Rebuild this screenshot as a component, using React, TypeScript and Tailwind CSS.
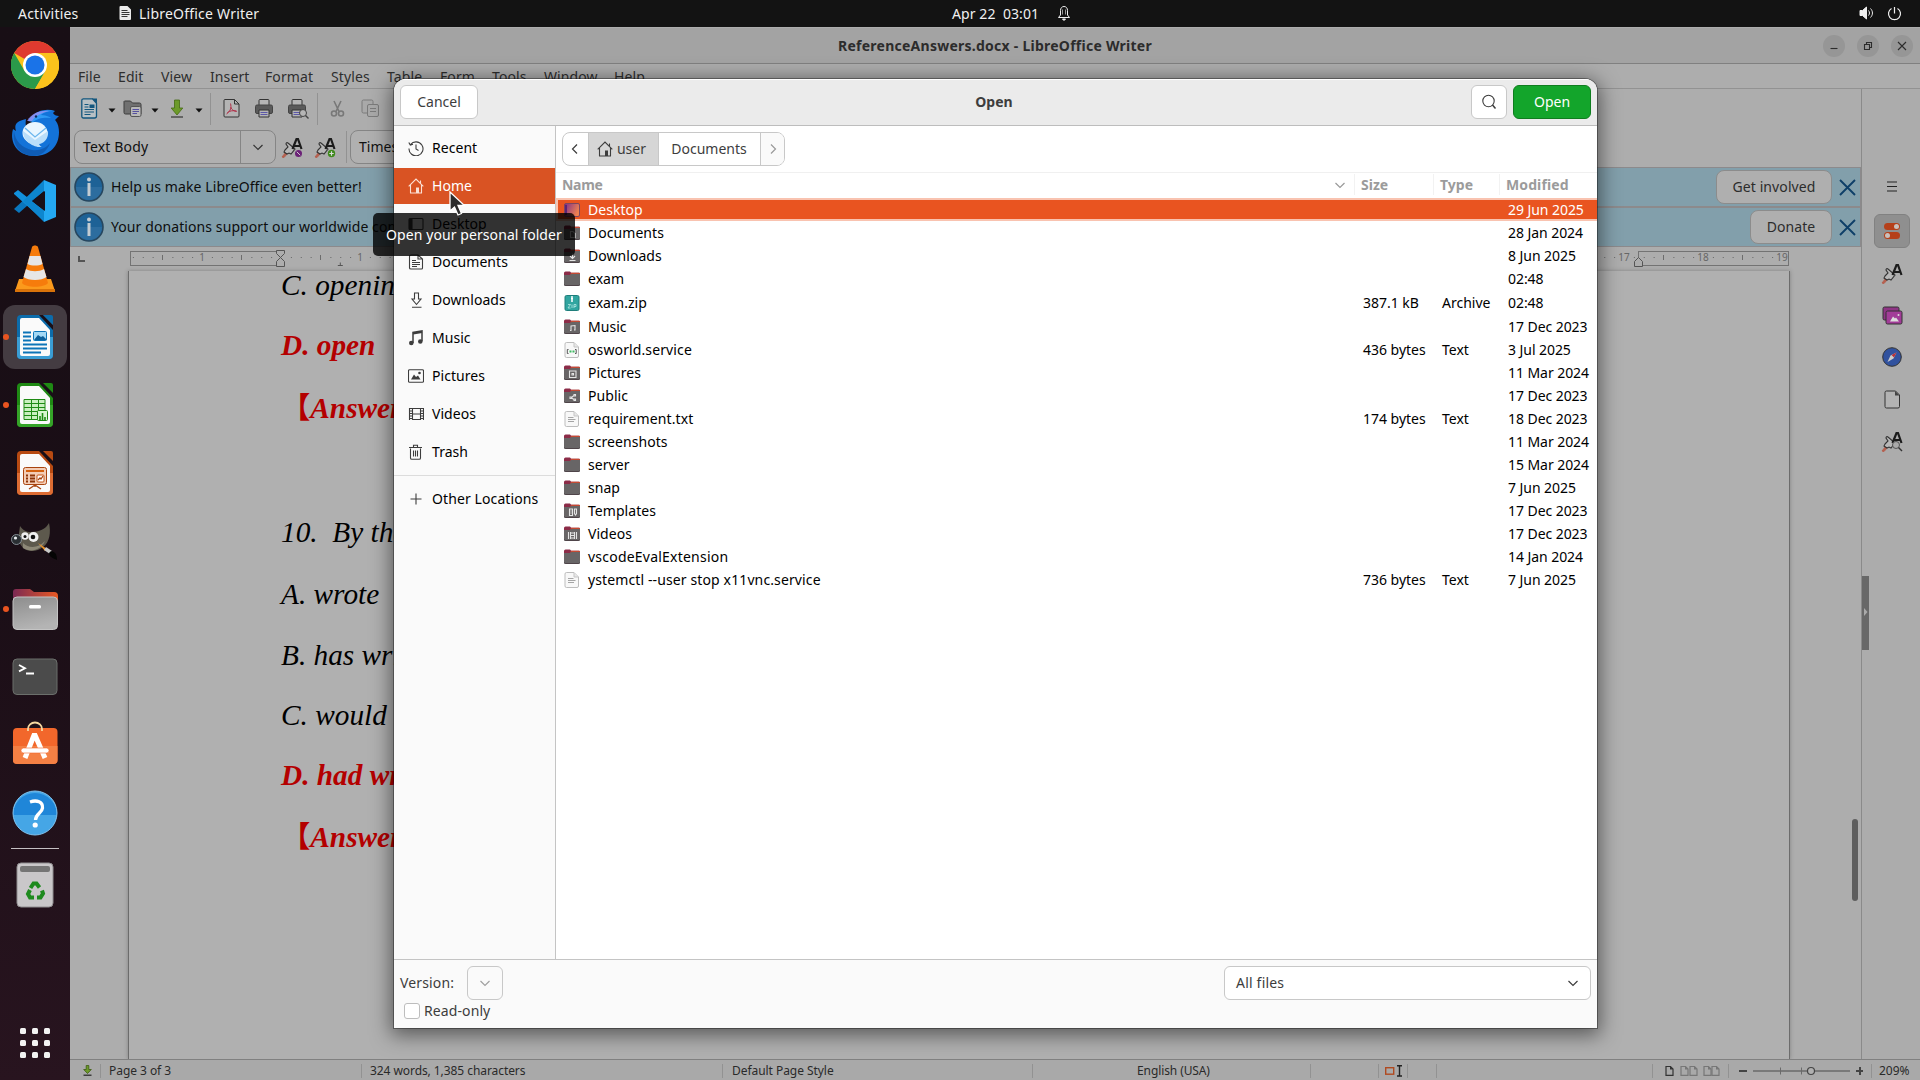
import React, { ReactNode } from "react";

/* ---------- dock icons ---------- */

const Chrome = () => (
  <svg width="48" height="48" viewBox="0 0 48 48">
    <circle cx="24" cy="24" r="24" fill="#fbc21c" />
    <path d="M24 24 3.200 12A24 24 0 0 1 44.800 12Z" fill="#df3a2f" />
    <path d="M3.200 12A24 24 0 0 0 24 48L34.500 30 24 24 13.600 30Z" fill="#2b9a4a" />
    <path d="M24 12H44.800A24 24 0 0 1 24 48L34.400 30Z" fill="#fbc21c" />
    <circle cx="24" cy="24" r="12" fill="#fff" />
    <circle cx="24" cy="24" r="9.500" fill="#1a73e8" />
  </svg>
);

const Thunderbird = () => (
  <svg width="50" height="48" viewBox="0 0 50 48">
    <path d="M3 20c-4 14 5 27 21 27s25-10 25-24c0-6-2-10-4-12l4-4c-3 0-5-1-6-3l2-2c-9-3-19 0-23 6l-4 2 6 1c-4 3-6 8-5 13-3-4-4-8-3-14C6 12 4 16 6 22z" fill="#1373d9" />
    <path d="M4 22c1 10 8 17 18 19 8 1 14-2 18-7-3 9-10 13-17 13C10 46 2 36 4 22Z" fill="#0f5cb5" />
    <path d="M18 12c4-8 14-12 27-10-8 0-12 2-14 4 6 0 10 3 10 3-6-1-14 0-18 4z" fill="#2f9bf5" />
    <path d="M17 12c4-7 12-11 22-10-8 2-14 5-17 10z" fill="#a58cf0" opacity=".7" />
    <ellipse cx="25" cy="24" rx="12.500" ry="11" fill="#e9f6ff" />
    <path d="M13 22l12 9 13-9c1 8-5 13-9 13 1 2 2 3 3 3-6 1-19-4-19-16z" fill="#b9defa" />
    <path d="M15 19l10 9 11-9" fill="none" stroke="#6db7ee" strokeWidth="1.300" />
    <circle cx="26" cy="7.500" r="1.200" fill="#0a2b5a" />
  </svg>
);

const VSCode = () => (
  <svg width="44" height="44" viewBox="0 0 44 44">
    <path d="M1 30 31 2l2 8L6 34Z" fill="#0a76bd" />
    <path d="M1 14 5 11 33 33l-2 9L1 15Z" fill="#1290dc" />
    <path d="M31 1 43 6v32l-12 5V1Z" fill="#24a8f2" />
    <path d="M31 1v11L18 22l13 10v11L14 26l-4-4 4-4Z" fill="#0d86cf" />
    <path d="M32 12v20L19 22Z" fill="#190f17" />
  </svg>
);

const VLC = () => (
  <svg width="42" height="48" viewBox="0 0 42 48">
    <path d="M5 34h32l4 12H1Z" fill="#fb9a1c" />
    <path d="M1 44h40v3H1z" fill="#d9730a" />
    <path d="M18 2c1-2 5-2 6 0l10 36c-4 5-22 5-26 0Z" fill="#f67c0c" />
    <path d="M15.500 11h11l2 8c-4 2-11 2-15 0zM12 24c5 3 13 3 18 0l2.500 8c-5 4-18 4-23 0z" fill="#e6e6e6" />
  </svg>
);

const OfficeDoc = ({ dark, light, children }: { dark: string; light: string; children: ReactNode }) => (
  <svg width="38" height="46" viewBox="0 0 38 46">
    <path d="M5 1h20l12 13v27a4 4 0 0 1-4 4H5a4 4 0 0 1-4-4V5a4 4 0 0 1 4-4Z" fill={dark} />
    <path d="M1 23h36v18a4 4 0 0 1-4 4H5a4 4 0 0 1-4-4Z" fill={light} />
    <path d="M6 4h17l11 12v24a2 2 0 0 1-2 2H6a2 2 0 0 1-2-2V6a2 2 0 0 1 2-2Z" fill="#fafafa" />
    <path d="M23 1h4l10 10v5Z" fill="#190f17" />
    <path d="M27 1h8a2 2 0 0 1 2 2v8Z" fill={dark} />
    {children}
  </svg>
);

const WriterIcon = () => (
  <OfficeDoc dark="#0c6cab" light="#3a9dd4">
    <path d="M7 18.500h8M7 22.500h8M7 26.500h8M7 30.500h24M7 34.500h24M7 38.500h18" stroke="#0c74b8" strokeWidth="2" />
    <rect x="17.500" y="17.500" width="13" height="9" rx="1" fill="#a3d8f5" stroke="#0c74b8" />
    <path d="M18 26l4-5 3 2 2-1 4 4z" fill="#0c5f9a" />
  </OfficeDoc>
);

const CalcIcon = () => (
  <OfficeDoc dark="#1f8a14" light="#35a428">
    <path d="M8 17.500h21v20H8zM8 21.500h21M8 25.500h21M8 29.500h21M8 33.500h21M15.500 17v20M22.500 17v20" fill="#c9efbf" stroke="#1f8a14" />
    <rect x="21.500" y="28.500" width="10" height="10" rx="1" fill="#d8f5d0" stroke="#1f8a14" />
    <path d="M24 38v-4M26.500 38v-7M29 38v-3" stroke="#1f8a14" strokeWidth="1.600" />
  </OfficeDoc>
);

const ImpressIcon = () => (
  <OfficeDoc dark="#b84a12" light="#dd6c33">
    <rect x="7.500" y="17.500" width="23" height="17" rx="2" fill="#f3cdb6" stroke="#a8440f" />
    <path d="M10 21h18" stroke="#d4600f" strokeWidth="2" />
    <path d="M10 25.500h2M10 28.500h2M10 31.500h2M14 25.500h5M14 28.500h5M14 31.500h5" stroke="#8d3508" strokeWidth="2" />
    <rect x="21" y="25" width="7" height="7" rx="1" fill="#fff" stroke="#c55517" />
    <path d="M22 30l2-2 1 1 2-3M19 35v2M13 39l6-4 6 4" fill="none" stroke="#a8440f" strokeWidth="1.300" />
  </OfficeDoc>
);

const Gimp = () => (
  <svg width="48" height="40" viewBox="0 0 48 40">
    <path d="M9 5c3 4 6 6 11 6 8 0 15-3 18-9 2 9 1 19-6 24-6 5-15 5-20 1L7 20Z" fill="#5d594d" />
    <path d="M12 22c6 6 16 5 22-2-4 9-14 12-22 7z" fill="#8d8877" />
    <circle cx="14" cy="15" r="3.700" fill="#f0f0f0" />
    <circle cx="22.500" cy="16" r="5" fill="#f0f0f0" />
    <circle cx="14" cy="15.500" r="1.500" fill="#111" />
    <circle cx="22" cy="16" r="2.300" fill="#111" />
    <circle cx="5.500" cy="18.500" r="5" fill="#2a2f33" stroke="#9aa6ad" strokeWidth=".8" />
    <circle cx="4.500" cy="17" r="1.600" fill="#e8edf0" />
    <path d="M27 22l9 6-2 2z" fill="#e8922a" />
    <path d="M35 26l6 4-2 3-6-4z" fill="#c8c8c8" />
    <path d="M40 30c5 1 6 4 6 9-4-2-8-3-8-7z" fill="#050505" />
  </svg>
);

const FilesIcon = () => (
  <svg width="46" height="42" viewBox="0 0 46 42">
    <defs>
      <linearGradient id="ft" x1="0" x2="1">
        <stop offset="0" stopColor="#7b2953" />
        <stop offset="1" stopColor="#ea5a24" />
      </linearGradient>
      <linearGradient id="fb" x1="0" y1="0" x2="0.300" y2="1">
        <stop offset="0" stopColor="#8d8d8d" />
        <stop offset="1" stopColor="#b4b4b4" />
      </linearGradient>
    </defs>
    <path d="M4 1h14l4 3h20a4 4 0 0 1 4 4v12H1V4a3 3 0 0 1 3-3Z" fill="url(#ft)" />
    <rect x="1" y="9" width="44.500" height="32.500" rx="4" fill="url(#fb)" stroke="#c4c4c4" />
    <rect x="17" y="17" width="12" height="3.500" rx="1.500" fill="#fff" />
  </svg>
);

const TerminalIcon = () => (
  <svg width="46" height="38" viewBox="0 0 46 38">
    <rect x="1" y="1" width="44" height="35.500" rx="4" fill="#4b4b4b" stroke="#6b6f6b" />
    <path d="M7 7l6 3.200-6 3.200M14 15.500h8" fill="none" stroke="#fff" strokeWidth="1.800" />
  </svg>
);

const SoftwareIcon = () => (
  <svg className="mb-1" width="46" height="44" viewBox="0 0 46 44">
    <rect x="1" y="7" width="44.500" height="36" rx="4" fill="#f2672b" />
    <path d="M1 25h44.500v14a4 4 0 0 1-4 4H5a4 4 0 0 1-4-4Z" fill="#f48044" />
    <path d="M16 10V8a7 6.500 0 0 1 14 0v2" fill="none" stroke="#f7d8a0" strokeWidth="1.800" />
    <path d="M13 37l9.500-24 10.500 24" fill="none" stroke="#fff" strokeWidth="5" strokeLinejoin="bevel" />
    <rect x="9" y="27" width="28" height="5" rx="2.500" fill="#fff" stroke="#f2672b" strokeWidth=".6" />
  </svg>
);

const HelpIcon = () => (
  <svg width="46" height="46" viewBox="0 0 46 46">
    <circle cx="23" cy="23" r="22" fill="#45a6e6" />
    <path d="M1 25a22 22 0 1 1 44 0Z" fill="#1f86d8" />
    <circle cx="23" cy="23" r="22" fill="none" stroke="#80c3ef" />
    <path d="M18 12c7-2.500 13 0 12.500 6-.5 5-7 6-7 12" fill="none" stroke="#fff" strokeWidth="3.300" />
    <circle cx="23.200" cy="35" r="2.600" fill="#fff" />
  </svg>
);

const TrashBin = () => (
  <svg width="38" height="46" viewBox="0 0 38 46">
    <rect x="1" y="1" width="36" height="44" rx="4" fill="#c9c7c9" stroke="#8f8d8f" />
    <rect x="4" y="4" width="30" height="6" rx="2" fill="#757575" />
    <g fill="none" stroke="#1e8a1e" strokeWidth="4">
      <path d="M14.500 26l3-4.500h3l3 4" />
      <path d="M26 28.500l1 3-2.500 4H21" />
      <path d="M18 35.500h-4l-2-3.500 2-4" />
    </g>
  </svg>
);

const dock: { icon: ReactNode; dot?: boolean; on?: boolean }[] = [
  { icon: <Chrome /> },
  { icon: <Thunderbird /> },
  { icon: <VSCode /> },
  { icon: <VLC /> },
  { icon: <WriterIcon />, dot: true, on: true },
  { icon: <CalcIcon />, dot: true },
  { icon: <ImpressIcon /> },
  { icon: <Gimp /> },
  { icon: <FilesIcon />, dot: true },
  { icon: <TerminalIcon /> },
  { icon: <SoftwareIcon /> },
  { icon: <HelpIcon /> },
];

const Dock = () => (
  <nav className="flex w-[70px] shrink-0 flex-col items-center bg-linear-to-b from-[#180e15] via-[#1a0e16] to-[#28141f] pt-1">
    {dock.map((d, i) => (
      <div key={i} className="relative flex h-[68px] w-[70px] items-center justify-center">
        <div className={d.on ? "flex size-16 items-center justify-center rounded-xl bg-[#443c42]" : "flex size-16 items-center justify-center"}>{d.icon}</div>
        {d.dot && <i className="absolute top-[31px] left-[3px] size-1.5 rounded-full bg-[#e95420]" />}
      </div>
    ))}
    <div className="mt-px h-px w-12 bg-[#c4c0c3]" />
    <div className="mt-[13px]"><TrashBin /></div>
    <div className="mt-auto mb-[22px] grid grid-cols-3 gap-[6px]">
      {Array.from({ length: 9 }, (_, i) => <i key={i} className="size-[6px] rounded-[1.5px] bg-[#f2f2f2]" />)}
    </div>
  </nav>
);

/* ---------- top bar ---------- */

const TopBar = () => (
  <header className="flex h-[27px] items-center bg-[#131313] pb-px text-[14px] text-[#f0f0f0]">
    <span className="w-[101px] pl-[18px] tracking-[0.22px]">Activities</span>
    <svg className="ml-[18px]" width="13" height="16" viewBox="0 0 13 16">
      <path d="M1.500 1h7L12 4.500V14a1 1 0 0 1-1 1H1.500a1 1 0 0 1-1-1V2a1 1 0 0 1 1-1Z" fill="#e9e9e9" />
      <path d="M2.500 5.500h6M2.500 7.500h8M2.500 9.500h8M2.500 11.500h6" stroke="#333" />
    </svg>
    <span className="ml-[7px] w-[813px] tracking-[0.22px]">LibreOffice Writer</span>
    <span className="w-[105px] tracking-[0.08px] whitespace-pre">Apr 22  03:01</span>
    <svg width="14" height="16" viewBox="0 0 14 16" fill="none" stroke="#f0f0f0">
      <path d="M1.500 12.500h11l-2-2.500V5.500C10.500 3 9 1.500 7 1.500S3.500 3 3.500 5.500V10Z" />
      <path d="M5.500 4.500v5M8.500 4.500v5" strokeWidth=".6" />
      <path d="M5.500 14h3L7 15.500z" fill="#f0f0f0" />
    </svg>
    <svg className="ml-auto mr-[12px]" width="16" height="16" viewBox="0 0 16 16" fill="none" stroke="#f0f0f0">
      <path d="M1 5.500h2.500L7.500 2v12L3.500 10.500H1z" fill="#f0f0f0" />
      <path d="M9.500 5.500c1.300 1.500 1.300 3.500 0 5M11.500 3.500c2.600 2.700 2.600 6.300 0 9" />
    </svg>
    <svg className="mr-[18px]" width="15" height="15" viewBox="0 0 15 15" fill="none" stroke="#f0f0f0" strokeWidth="1.200">
      <path d="M4.500 2.500a6 6 0 1 0 6 0M7.500 1v6.500" />
    </svg>
  </header>
);

/* ---------- writer window ---------- */

const WinBtn = ({ children }: { children: ReactNode }) => (
  <span className="flex size-[22px] items-center justify-center rounded-full bg-[#969696]">
    <svg width="12" height="12" viewBox="0 0 12 12" fill="none" stroke="#2c2c2c" strokeWidth="1.100">{children}</svg>
  </span>
);

const TitleBar = () => (
  <div className="grid h-[37px] grid-cols-[1fr_auto_1fr] items-center border-t border-b border-t-[#adadad] border-b-[#808080] bg-[#a3a3a3]">
    <span />
    <span className="text-[14px] font-bold tracking-[0.25px] text-[#2c2c2c]">ReferenceAnswers.docx - LibreOffice Writer</span>
    <span className="flex justify-end gap-3 pr-[7px]">
      <WinBtn><path d="M2.500 8.500h7" /></WinBtn>
      <WinBtn><path d="M2.500 4.500h5v5h-5zM4.500 4.500v-2h5v5h-2" /></WinBtn>
      <WinBtn><path d="M2 2l8 8M10 2l-8 8" /></WinBtn>
    </span>
  </div>
);

const menus: [string, string][] = [
  ["File", "w-10"], ["Edit", "w-[43px]"], ["View", "w-[49px]"], ["Insert", "w-[55px]"], ["Format", "w-[66px]"], ["Styles", "w-14"],
  ["Table", "w-[53px]"], ["Form", "w-[52px]"], ["Tools", "w-[52px]"], ["Window", "w-[70px]"], ["Help", "w-12"],
];

const Caret = () => (
  <svg width="8" height="5" viewBox="0 0 8 5"><path d="M.5.500h7L4 4.500z" fill="#111" /></svg>
);

const Brush = ({ badge }: { badge?: "no" | "add" | "find" }) => (
  <svg className="overflow-visible" width="22" height="21" viewBox="0 0 22 21">
    <path d="M1 20l4-5 1.500 1.500L3 20.500z" fill="#b5604f" stroke="#b5604f" />
    <path d="M4 13l3-3-2-3c0-1 1-2 2-1l7 6-4 5-2-1-2 1-3-2Z" fill="#b8b8b8" stroke="#333" strokeWidth="1.100" />
    <path d="M11.500 12L15.500 2h1.500l3.500 10M13 9h6.500" fill="none" stroke="#1c1c1c" strokeWidth="2.200" />
    {badge === "no" && <g><circle cx="17.500" cy="16.500" r="3.500" fill="#6b2177" /><path d="M15.800 14.800l3.400 3.400" stroke="#ccc" /></g>}
    {badge === "add" && <g><circle cx="17.500" cy="16.500" r="3.700" fill="#3f8a1c" /><path d="M17.500 14.300v4.400M15.300 16.500h4.400" stroke="#ddd" strokeWidth="1.200" /></g>}
    {badge === "find" && <g><circle cx="15" cy="14" r="3.500" fill="#aaa" stroke="#555" /><path d="M17.500 16.500l3.500 3.500" stroke="#333" strokeWidth="1.400" /></g>}
  </svg>
);

const Printer = ({ find }: { find?: boolean }) => (
  <svg width="22" height="20" viewBox="0 0 22 20">
    <path d="M4 6V1.500q0-1 1-1h8q1 0 1 1V6" fill="#b5b5b5" stroke="#333" />
    <rect x=".5" y="6" width="17" height="8.500" rx="1.500" fill="#5a5a5a" stroke="#444" />
    <path d="M4 11h10v7H4z" fill="#b5b5b5" stroke="#333" />
    <path d="M5.500 13.500h7M5.500 15.500h7" stroke="#5c58a8" />
    {find && <g><circle cx="15" cy="14" r="3.500" fill="#b5b5b5" stroke="#444" /><path d="M17.500 16.500l3 3" stroke="#444" strokeWidth="1.400" /></g>}
  </svg>
);

const Toolbar = () => (
  <div className="flex h-[38px] items-center pt-px pl-[11px]">
    <svg width="17" height="21" viewBox="0 0 17 21">
      <path d="M2 .8h9.500l4 4.500V18a2 2 0 0 1-2 2H2.500a1.700 1.700 0 0 1-1.700-1.700V2.500A1.700 1.700 0 0 1 2.500.8Z" fill="#b8c0c4" stroke="#12567e" strokeWidth="1.300" />
      <path d="M11 .5h5v5z" fill="#12567e" />
      <path d="M3.500 6.500h4M3.500 9h4M3.500 11.500h9.500M3.500 14h9.500M3.500 16.500h6" stroke="#12567e" />
      <rect x="8.500" y="6.500" width="5" height="3.500" fill="#12567e" />
    </svg>
    <span className="ml-2.5 mt-1"><Caret /></span>
    <svg className="ml-[7px]" width="20" height="19" viewBox="0 0 20 19">
      <path d="M1.500 2h6l2 2h7q1.500 0 1.500 1.500V15H2.500Q1 15 1 13.500v-11z" fill="#707070" stroke="#3d3d3d" />
      <rect x="7.500" y="7.500" width="10.500" height="10" rx="1.500" fill="#b8b8b8" stroke="#555" />
      <path d="M9.500 10.500h6.500M9.500 12.500h6.500M9.500 14.500h4.500" stroke="#5550a0" />
    </svg>
    <span className="ml-2 mt-1"><Caret /></span>
    <svg className="ml-[11px]" width="14" height="19" viewBox="0 0 14 19">
      <path d="M4.500 1h5v8h3.300L7 16 1.200 9h3.300z" fill="#6c9a2a" stroke="#456b12" strokeWidth=".8" />
      <path d="M1 18h12" stroke="#333" strokeWidth="1.200" />
    </svg>
    <span className="ml-[11px] mt-1"><Caret /></span>
    <i className="ml-[7px] h-8 w-px bg-[#929292]" />
    <svg className="ml-3" width="17" height="19" viewBox="0 0 17 19">
      <path d="M2 .5h9.500l4.500 4.500V17q0 1-1 1H2q-1 0-1-1V1.500q0-1 1-1Z" fill="#b4b4b4" stroke="#333" />
      <path d="M11.500.5V5H16" fill="none" stroke="#333" />
      <path d="M7.500 4.500c1 4 .5 7-4 10.500M7.700 8c1 3 3 4 6 4.500M4.500 13.500c3-2 5-2 9-1.500" fill="none" stroke="#b03048" />
    </svg>
    <span className="ml-[15px]"><Printer /></span>
    <span className="ml-[11px]"><Printer find /></span>
    <i className="ml-[7px] h-8 w-px bg-[#929292]" />
    <svg className="ml-3" width="15" height="18" viewBox="0 0 15 18" fill="none" stroke="#787878" strokeWidth="1.600">
      <path d="M4 1l5 10.500M11 1L6 11.500" />
      <circle cx="4" cy="13.500" r="2.500" /><circle cx="11" cy="13.500" r="2.500" />
    </svg>
    <svg className="ml-4" width="19" height="19" viewBox="0 0 19 19" fill="#a9a9a9" stroke="#7b7b7b">
      <rect x="1" y="1" width="11" height="13" rx="1.500" /><rect x="6.500" y="5.500" width="11" height="12" rx="1.500" />
      <path d="M9 9.500h6M9 12.500h6" />
    </svg>
  </div>
);

const Chevron = ({ c = "#333", s = 12 }: { c?: string; s?: number }) => (
  <svg width={s} height={s} viewBox="0 0 12 12" fill="none" stroke={c} strokeWidth="1.200"><path d="M1.500 4l4.500 4.500L10.500 4" /></svg>
);

const FormatBar = () => (
  <div className="flex h-10 items-center pl-1 text-[14px] text-[#111]">
    <div className="flex h-[34px] w-[202px] items-center rounded-lg border border-[#858585] bg-[#b0b0b0]">
      <span className="flex-1 pb-0.5 pl-2 tracking-[0.15px]">Text Body</span>
      <span className="flex h-full w-[35px] items-center justify-center border-l border-[#858585]"><Chevron /></span>
    </div>
    <span className="ml-[5px]"><Brush badge="no" /></span>
    <span className="ml-[11px]"><Brush badge="add" /></span>
    <i className="ml-[10px] h-8 w-px bg-[#929292]" />
    <div className="ml-[3px] flex h-[34px] w-[202px] items-center rounded-lg border border-[#858585] bg-[#b0b0b0] pb-0.5 pl-2">Times New Roman</div>
  </div>
);

const InfoBar = ({ text, button, width }: { text: string; button: string; width: string }) => (
  <div className="flex h-10 items-center border border-[#8c8a8c] bg-[#829fab] pl-[3px] text-[14px] text-[#0d0d0d]">
    <svg width="30" height="30" viewBox="0 0 30 30">
      <circle cx="15" cy="15" r="14" fill="#1d6296" stroke="#27475f" strokeWidth="1.600" />
      <path d="M2 15a13 13 0 0 0 26 0z" fill="#2c6d9f" />
      <circle cx="15" cy="7.500" r="2" fill="#c3ccd2" />
      <rect x="13.500" y="11" width="3" height="13" fill="#c3ccd2" />
    </svg>
    <span className="ml-[7px] pb-0.5 tracking-[0.09px]">{text}</span>
    <button className={`ml-auto h-[34px] rounded-lg border border-[#8c8c8c] bg-[#afafaf] pb-0.5 tracking-[0.1px] text-[#2c2c2c] ${width}`}>{button}</button>
    <svg className="mr-[4px] ml-[7px]" width="17" height="17" viewBox="0 0 17 17" stroke="#0e3f68" strokeWidth="1.900"><path d="M1 1l15 15M16 1L1 16" /></svg>
  </div>
);

/* Horizontal ruler: 79px per centimetre, zero at the left paragraph indent. */
const ZERO = 211;
const Ruler = () => {
  const dots: ReactNode[] = [];
  for (let i = -15; i <= 152; i++) {
    const x = ZERO + (i * 79) / 8;
    if (i % 8 === 0) {
      if (i !== 0)
        dots.push(<text key={i} x={x} y="14" textAnchor="middle" fontSize="10" fontFamily="Noto Sans" fill="#666">{Math.abs(i / 8)}</text>);
    } else if (i % 4 === 0) dots.push(<path key={i} d={`M${x} 8v5`} stroke="#6c6c6c" />);
    else dots.push(<rect key={i} x={x} y="10" width="1" height="1" fill="#666" />);
  }
  const tabs: ReactNode[] = [];
  for (let i = 1; i < 23; i++) {
    const x = ZERO + 59.300 * i;
    tabs.push(<path key={i} d={`M${x} 15.500v3M${x - 2.500} 18.500h5`} stroke="#555" />);
  }
  return (
    <svg className="block" width="1791" height="24" viewBox="0 0 1791 24">
      <path d="M9 9v5h6" fill="none" stroke="#555" strokeWidth="2" />
      <rect x="60.500" y="4.500" width="150" height="14" fill="none" stroke="#737373" />
      <rect x="1568.500" y="4.500" width="150" height="14" fill="none" stroke="#737373" />
      {dots}
      {tabs}
      <path d="M206.500 3.500h8v3l-4 4 4 4v5h-8v-5l4-4-4-4zM1564.500 19.500v-5l4-4 4 4v5z" fill="#adadad" stroke="#555" />
    </svg>
  );
};

const lines: [string, string, boolean][] = [
  ["C. opening", "mt-1", false],
  ["D. open", "mt-10", true],
  ["【Answer】", "mt-[43px]", true],
  ["10.  By the", "mt-[104px]", false],
  ["A. wrote", "mt-[42px]", false],
  ["B. has written", "mt-[41px]", false],
  ["C. would write", "mt-10", false],
  ["D. had written", "mt-10", true],
  ["【Answer】", "mt-[42px]", true],
];

const Document = () => (
  <div className="flex min-h-0 flex-1 bg-[#adadad]">
    <div className="ml-[58px] w-[1662px] shrink-0 border-x border-x-[#6c6c6c] bg-[#b0b0b0] pl-[152px] shadow-[0_0_4px_rgba(0,0,0,0.25)]">
      {lines.map(([t, mt, red], i) => (
        <p key={i} className={`h-5 whitespace-pre font-['Liberation_Serif','Noto_Sans_CJK_SC',serif] text-[29.300px] leading-5 italic ${mt} ${red ? "font-bold text-[#b40000]" : "text-black"}`}>
          {t.startsWith("【") ? <><span className="not-italic">【</span>{t.slice(1)}</> : t}
        </p>
      ))}
    </div>
    <div className="ml-auto flex w-[9px] flex-col pt-[548px]">
      <i className="h-[82px] w-[6px] rounded-full bg-[#5e5e5e]" />
    </div>
  </div>
);

const SideBar = () => (
  <aside className="flex w-[59px] shrink-0 border-l border-[#8a8a8a] bg-[#acacac]">
    <div className="w-1.5 pt-[487px]"><i className="block h-[74px] w-[7px] bg-[#686868] pt-7">
      <svg width="7" height="16" viewBox="0 0 7 16"><path d="M2 4l3.500 4L2 12z" fill="#aaa" /></svg></i></div>
    <div className="flex flex-col items-center pl-1.5">
      <div className="flex h-[125px] w-9 items-end justify-center pb-5">
        <svg width="12" height="14" viewBox="0 0 12 14" stroke="#222" strokeWidth="1.200"><path d="M1 2h10M1 6.500h10M1 11h10" /></svg>
      </div>
      <div className="flex h-[34px] w-9 items-center justify-center rounded-md border border-[#818181] bg-[#8f8f8f]">
        <svg width="18" height="18" viewBox="0 0 18 18"><rect x="1" y="1" width="16" height="7" rx="3.500" fill="#b5401a" /><circle cx="13.500" cy="4.500" r="2.500" fill="#c9c0bc" /><rect x="1" y="10" width="16" height="7" rx="3.500" fill="#b5401a" /><circle cx="4.500" cy="13.500" r="2.500" fill="#c9c0bc" /></svg>
      </div>
      <div className="flex h-[42px] items-center pt-2"><Brush /></div>
      <div className="flex h-[42px] items-center pt-2">
        <svg width="21" height="19" viewBox="0 0 21 19"><rect x="1" y="1" width="16" height="13" rx="1.500" fill="#8f3585" stroke="#333" /><rect x="4" y="5" width="16" height="13" rx="1.500" fill="#a23c98" stroke="#333" /><path d="M8 15.500l3-5 2 2 1-1 3 4z" fill="#ddd" /><circle cx="16.500" cy="9" r="1" fill="#ddd" /></svg>
      </div>
      <div className="flex h-[42px] items-center pt-2">
        <svg width="20" height="20" viewBox="0 0 20 20"><circle cx="10" cy="10" r="9.300" fill="#31529f" stroke="#333" /><path d="M14.500 5.500l-3 6-6 3.500 3-6.500z" fill="#ccc" /><path d="M14.500 5.500l-2.500 5-2.500-2.500z" fill="#b63038" /></svg>
      </div>
      <div className="flex h-[42px] items-center pt-2">
        <svg width="17" height="19" viewBox="0 0 17 19"><path d="M2.500 1h9l4 4v11.500q0 1.500-1.500 1.500H2.500Q1 18 1 16.500v-14Q1 1 2.500 1Z" fill="#b3b3b3" stroke="#333" /><path d="M11 1v4.500h4.500z" fill="#444" /></svg>
      </div>
      <div className="flex h-[42px] items-center pt-2"><Brush badge="find" /></div>
    </div>
  </aside>
);

const PageGlyph = ({ c }: { c: string }) => (
  <svg width="9" height="11" viewBox="0 0 9 11"><path d="M1 1.500h4.500L8 4v6.300H1z" fill="none" stroke={c} strokeWidth="1.200" /><path d="M5 1v3.500h3z" fill={c} /></svg>
);

const Cell = ({ w, children }: { w: string; children?: ReactNode }) => (
  <div className={`flex h-[14px] shrink-0 items-center border-l border-[#929292] ${w}`}>{children}</div>
);

const StatusBar = () => (
  <footer className="flex h-[21px] items-center border-t border-[#808080] bg-[#a9a9a9] pt-px text-[12px] text-[#2a2a2a]">
    <div className="flex w-[30px] justify-end pr-2">
      <svg width="9" height="11" viewBox="0 0 9 11"><path d="M3.200.5h2.600v4h2.500L4.500 8.500.7 4.500h2.500z" fill="#6c9a2a" stroke="#3d5c12" strokeWidth=".8" /><path d="M.5 10.200h8" stroke="#222" strokeWidth="1.200" /></svg>
    </div>
    <Cell w="w-[261px] pl-2 tracking-[-0.05px]">Page 3 of 3</Cell>
    <Cell w="w-[361px] pl-2 tracking-[-0.07px]">324 words, 1,385 characters</Cell>
    <Cell w="w-[310px] pl-[9px] tracking-[-0.05px]">Default Page Style</Cell>
    <Cell w="w-[278px] pl-[104px] tracking-[-0.1px]">English (USA)</Cell>
    <Cell w="w-[68px]" />
    <Cell w="w-[29px] pl-1.5">
      <svg width="18" height="12" viewBox="0 0 18 12" fill="none"><rect x=".7" y="2.700" width="8" height="6.500" stroke="#b04a20" strokeWidth="1.400" /><path d="M12 .8h5M12 11h5M14.500 1v10" stroke="#222" strokeWidth="1.400" /></svg>
    </Cell>
    <Cell w="w-[29px]" />
    <Cell w="w-[216px]" />
    <Cell w="w-[76px] pl-3">
      <PageGlyph c="#333" /><i className="w-1.5" /><PageGlyph c="#777" /><PageGlyph c="#777" /><i className="w-[5px]" /><PageGlyph c="#777" /><span className="-ml-px flex"><PageGlyph c="#777" /></span>
    </Cell>
    <Cell w="w-[143px] pl-2.5">
      <svg width="124" height="12" viewBox="0 0 124 12" stroke="#444" fill="none">
        <path d="M0 6h8M117 6h8M121 2v8" strokeWidth="2" />
        <path d="M14 6h97" stroke="#6a6a6a" strokeWidth="1.500" /><path d="M41.500 2.500v7M62.500 2.500v7" stroke="#6a6a6a" />
        <circle cx="72" cy="6" r="3.500" fill="#b0b0b0" strokeWidth="1.200" />
      </svg>
    </Cell>
    <Cell w="w-12 pl-[7px]">209%</Cell>
  </footer>
);

/* ---------- file dialog ---------- */

const P = ({ d, c = "#3d3d3d", children }: { d?: string; c?: string; children?: ReactNode }) => (
  <svg className="shrink-0" width="16" height="16" viewBox="0 0 16 16" fill="none" stroke={c} strokeWidth="1.100">{d && <path d={d} />}{children}</svg>
);

const HOME = "M.7 8.300L8 1l7.300 7.300M2.500 7v8h11V7M12.500 5V2.500";
const HomeIcon = ({ c }: { c: string }) => (
  <P c={c} d={HOME}><rect x="8" y="9.500" width="3" height="5.500" fill={c} stroke="none" /></P>
);

const places: [string, ReactNode][] = [
  ["Recent", <P d="M2.500 4.500a7 7 0 1 1-1.500 4M.8 2.500L2.300 5l2.700-.8M8 4.500v4.500l2.500 1.500" />],
  ["Home", <HomeIcon c="#fbe0d5" />],
  ["Desktop", <P d="M2 2.500h12q1 0 1 1v9q0 1-1 1H2q-1 0-1-1v-9q0-1 1-1Z"><path d="M1.500 3h2.500v10H1.500z" fill="#3d3d3d" /></P>],
  ["Documents", <P d="M3 1h7l4.500 4v9q0 1-1 1H3q-1.500 0-1.500-1V2.500Q1.500 1 3 1ZM10 1v4h4"><path d="M4 6.500h4M4 8.500h8M4 10.500h8M4 12.500h5" /></P>],
  ["Downloads", <P d="M6.500 1h4v6H13L8.500 12.500 4 7h2.500ZM4 15.300h9.500" />],
  ["Music", <P><path d="M5 13V2.500L14 1v10" strokeWidth="1.500" /><path d="M5 3.500l9-1.500" strokeWidth="2" /><circle cx="3.300" cy="13" r="2.300" fill="#3d3d3d" stroke="none" /><circle cx="12.300" cy="11.500" r="2.300" fill="#3d3d3d" stroke="none" /></P>],
  ["Pictures", <P d="M1.500 1.800h13q1 0 1 1v10.400q0 1-1 1h-13q-1 0-1-1V2.800q0-1 1-1Z"><path d="M3 11.500l3-5 2 2.500 2-1.500 2.500 4z" fill="#3d3d3d" stroke="none" /><circle cx="11.500" cy="5" r="1.300" fill="#3d3d3d" stroke="none" /></P>],
  ["Videos", <P d="M1.500 2v12M15.500 2v12M4.500 2v12M12.500 2v12M4.500 2.500h8M4.500 8h8M4.500 13.500h8"><path d="M3 2v12M14 2v12" strokeDasharray="1 1.500" strokeWidth="2" /></P>],
  ["Trash", <P d="M2.500 4.500V14q0 1.300 1.300 1.300h7.400q1.300 0 1.300-1.300V4.500M1 3.500h13M5.500 3V1.200h4V3M5.500 6.500v6M7.500 6.500v6M9.500 6.500v6" />],
];

const Folder = ({ mark }: { mark?: string }) => (
  <svg width="16" height="16" viewBox="0 0 16 16">
    <path d="M1.500.5h4.500l1.200 1.200H15q1 0 1 1V8H0V2Q0 .5 1.500.5Z" fill="#8c2c48" />
    <path d="M7 1.700h8q1 0 1 1V5H6z" fill="#c64a32" />
    <path d="M0 4h6l1.200-1H16v10.500q0 1.500-1.500 1.500h-13Q0 15 0 13.500Z" fill="#686566" />
    <path d="M.5 13.500q0 1 1 1h13q1 0 1-1" fill="none" stroke="#4f4449" />
    {mark && <path d={mark} fill="none" stroke="#e4e4e4" strokeWidth="1.100" />}
  </svg>
);

const TextFile = ({ service }: { service?: boolean }) => (
  <svg width="16" height="16" viewBox="0 0 16 16">
    <path d="M2.500.5h7.500L14.500 5v9q0 1.500-1.500 1.500H2.500Q1 15.500 1 14V2Q1 .5 2.500.5Z" fill="#f8f8f8" stroke="#bdbdbd" />
    <path d="M10 .8V5h4.300" fill="#e8e8e8" stroke="#c6c6c6" />
    {service ? (
      <g fill="none"><path d="M4.500 7.500H3.300v4h1.200M11 7.500h1.200v4H11" stroke="#555" /><path d="M5.500 9.500h5" stroke="#3fba62" strokeWidth="1.800" strokeDasharray="2 1" /></g>
    ) : (
      <path d="M4 6.500h5.500M4 8.500h7.500M4 10.500h6" stroke="#a5a5a5" />
    )}
  </svg>
);

const DesktopFile = () => (
  <svg width="16" height="16" viewBox="0 0 16 16">
    <defs><linearGradient id="dk" x1="0" x2="1" y2=".4"><stop offset="0" stopColor="#7d2f8c" /><stop offset="1" stopColor="#ef8050" /></linearGradient></defs>
    <rect x=".5" y="1.500" width="15" height="13" rx="1.500" fill="url(#dk)" stroke="#7c4660" />
    <path d="M1 3h2v10H1z" fill="#5c2474" />
  </svg>
);

const ZipFile = () => (
  <svg width="16" height="16" viewBox="0 0 16 16">
    <rect x="1" y=".5" width="14" height="15" rx="1.500" fill="#31a5a0" stroke="#1f7e7b" />
    <path d="M8 1v2M7 3.500h2M8 4v3" stroke="#fff" strokeWidth="1.500" />
    <path d="M4 9.500h2.500L4 13h2.500M8 9.500V13M10 13V9.500h2v2h-2" fill="none" stroke="#a7e2de" strokeWidth=".9" />
  </svg>
);

type Row = [string, ReactNode, string, string, string];
const files: Row[] = [
  ["Desktop", <DesktopFile />, "", "", "29 Jun 2025"],
  ["Documents", <Folder mark="M6.500 6.500h2.500l2 2v4h-4.500z" />, "", "", "28 Jan 2024"],
  ["Downloads", <Folder mark="M8.500 5.500v5M6 8l2.500 2.500L11 8M5.500 12.500h6" />, "", "", "8 Jun 2025"],
  ["exam", <Folder />, "", "", "02:48"],
  ["exam.zip", <ZipFile />, "387.1 kB", "Archive", "02:48"],
  ["Music", <Folder mark="M7 12V7l4-.5v5M6 11.500h1.500M10 11h1.500" />, "", "", "17 Dec 2023"],
  ["osworld.service", <TextFile service />, "436 bytes", "Text", "3 Jul 2025"],
  ["Pictures", <Folder mark="M5.500 6h6.500v6.500H5.500zM8 8.500h1.500v1.500H8z" />, "", "", "11 Mar 2024"],
  ["Public", <Folder mark="M6 9h1.500v1.500H6zM10 6.500h1.500V8H10zM10 11h1.500v1.500H10zM7.500 9.500L10 7.500M7.500 10l2.500 1.500" />, "", "", "17 Dec 2023"],
  ["requirement.txt", <TextFile />, "174 bytes", "Text", "18 Dec 2023"],
  ["screenshots", <Folder />, "", "", "11 Mar 2024"],
  ["server", <Folder />, "", "", "15 Mar 2024"],
  ["snap", <Folder />, "", "", "7 Jun 2025"],
  ["Templates", <Folder mark="M5.500 6h3v6.500h-3zM10.500 6h2v4.500l-1 1.500-1-1.500zM6.500 8h1M6.500 10h1" />, "", "", "17 Dec 2023"],
  ["Videos", <Folder mark="M4.500 6v7M12.500 6v7M6.500 6v7M10.500 6v7M6.500 7h4M6.500 9.500h4M6.500 12h4" />, "", "", "17 Dec 2023"],
  ["vscodeEvalExtension", <Folder />, "", "", "14 Jan 2024"],
  ["ystemctl --user stop x11vnc.service", <TextFile />, "736 bytes", "Text", "7 Jun 2025"],
];

const cols = "grid grid-cols-[798px_79px_66px_98px] items-center";

const Dialog = () => (
  <div className="absolute top-[79px] left-[394px] flex h-[949px] w-[1203px] flex-col overflow-hidden rounded-t-xl bg-[#fafafa] text-[14px] text-[#3d3d3d]">
    <div className="grid h-[47px] shrink-0 grid-cols-[1fr_auto_1fr] items-center border-t border-b border-t-white border-b-[#bdbdbd] bg-[#ebebeb] px-1.5 pb-px">
      <button className="h-[34px] w-[78px] rounded-md border border-[#c8c8c8] bg-white pb-px">Cancel</button>
      <b className="mr-[3px] pb-px">Open</b>
      <div className="flex justify-end gap-1.5">
        <button className="flex h-[34px] w-9 items-center justify-center rounded-md border border-[#c8c8c8] bg-white pb-px"><P><circle cx="7.500" cy="7" r="5.700" /><path d="M11.500 11l3 3.500" strokeWidth="1.500" /></P></button>
        <button className="h-[34px] w-[78px] rounded-md border border-[#0f7d1f] bg-[#13a52b] pb-px text-white">Open</button>
      </div>
    </div>
    <div className="flex min-h-0 flex-1">
      <div className="flex w-[162px] shrink-0 flex-col border-r border-[#c4c4c4] pt-[3px] text-black">
        {places.map(([name, icon]) => (
          <div key={name} className={name === "Home" ? "my-px flex h-9 items-center gap-2 bg-[#d95323] pl-3.5 text-white" : "my-px flex h-9 items-center gap-2 pl-3.5"}>{icon}<span className="pb-0.5 tracking-[0.05px]">{name}</span></div>
        ))}
        <div className="mt-1 h-px shrink-0 bg-[#dcdcdc]" />
        <div className="mt-[5px] flex h-9 items-center gap-2 pl-3.5"><P d="M8 2.500v11M2.500 8h11" /><span className="pb-0.5 tracking-[0.1px]">Other Locations</span></div>
      </div>
      <div className="flex flex-1 flex-col bg-white">
        <div className="flex h-[46px] items-center pl-1.5">
          <div className="flex h-[34px] w-[223px] items-stretch overflow-hidden rounded-lg border border-[#c8c8c8]">
            <span className="flex w-[25px] items-center justify-center pr-px"><svg width="8" height="12" viewBox="0 0 8 12" fill="none" stroke="#3d3d3d" strokeWidth="1.200"><path d="M6 1.500L1.500 6 6 10.500" /></svg></span>
            <span className="flex w-[71px] items-center justify-center gap-1 border-x border-[#c8c8c8] bg-[#d6d6d6] pr-1"><HomeIcon c="#3d3d3d" /><span className="pb-px">user</span></span>
            <span className="flex w-[101px] items-center justify-center pr-px pb-px">Documents</span>
            <span className="flex flex-1 items-center justify-center border-l border-[#c8c8c8] bg-[#fafafa]"><svg width="8" height="12" viewBox="0 0 8 12" fill="none" stroke="#999" strokeWidth="1.200"><path d="M2 1.500L6.500 6 2 10.500" /></svg></span>
          </div>
        </div>
        <div className={`h-[26px] border-t border-[#f0f0f0] pb-0.5 font-bold text-[#9b9b9b] ${cols}`}>
          <span className="flex items-center justify-between pr-2 pl-1.5 tracking-[-0.3px]">Name<Chevron c="#999" /></span>
          <span className="border-l border-[#f2f2f2] pl-1.5">Size</span>
          <span className="border-l border-[#f2f2f2] pl-1.5">Type</span>
          <span className="border-l border-[#f2f2f2] pl-1.5 tracking-[0.1px]">Modified</span>
        </div>
        {files.map(([name, icon, size, type, mod], i) => (
          <div key={name} className={`${cols} leading-[19px] ${i === 0 ? "h-[23px] border-2 border-[#f9c3b0] bg-[#e95420] text-white" : i === 4 ? "h-[25px] border-x-2 border-transparent text-black" : "h-[23px] border-x-2 border-transparent text-black"}`}>
            <span className={`flex items-center gap-2 pl-1.5 ${name.startsWith("vscode") ? "tracking-[0.22px]" : name.length > 12 ? "tracking-[0.12px]" : "tracking-[0.05px]"}`}>{icon}{name}</span>
            <span className="pl-[7px] tracking-[-0.02px] whitespace-nowrap">{size}</span>
            <span className="pl-[7px]">{type}</span>
            <span className="pl-[7px] tracking-[-0.06px] whitespace-nowrap">{mod}</span>
          </div>
        ))}
      </div>
    </div>
    <div className="h-[69px] shrink-0 border-t border-[#c4c4c4] pt-1.5">
      <div className="flex items-center pr-1.5 pl-1.5">
        <span className="w-[67px] pb-px tracking-[0.15px]">Version:</span>
        <span className="flex h-[34px] w-9 items-center justify-center rounded-md border border-[#c8c8c8]"><Chevron c="#a0a0a0" /></span>
        <span className="ml-auto flex h-[34px] w-[367px] items-center justify-between rounded-md border border-[#c8c8c8] bg-white pr-[11px] pl-[11px]"><span className="pb-px tracking-[0.2px]">All files</span><Chevron c="#3d3d3d" /></span>
      </div>
      <div className="mt-[3px] flex items-center gap-1 pl-2.5">
        <i className="size-4 rounded-[3px] border border-[#bdbdbd] bg-white" />
        <span className="leading-4 tracking-[0.1px]">Read-only</span>
      </div>
    </div>
  </div>
);

export default function App() {
  return (
    <div className="relative flex h-[1080px] w-[1920px] flex-col overflow-hidden font-['Noto_Sans',sans-serif]">
      <TopBar />
      <div className="flex min-h-0 flex-1">
        <Dock />
        <div className="flex min-w-0 flex-1 flex-col bg-[#adadad]">
          <TitleBar />
          <div className="flex h-[25px] items-center border-b border-[#929292] pl-2 text-[14px] tracking-[0.1px] text-[#2e2e2e]">
            {menus.map(([m, w]) => <span key={m} className={w}>{m}</span>)}
          </div>
          <div className="flex min-h-0 flex-1">
            <div className="flex w-[1791px] shrink-0 flex-col">
              <Toolbar />
              <FormatBar />
              <InfoBar text="Help us make LibreOffice even better!" button="Get involved" width="w-[116px]" />
              <InfoBar text="Your donations support our worldwide community." button="Donate" width="w-[82px]" />
              <Ruler />
              <Document />
            </div>
            <SideBar />
          </div>
          <StatusBar />
        </div>
      </div>
      <div className="absolute top-[79px] left-[394px] h-[949px] w-[1203px] rounded-t-xl shadow-[0_0_0_1px_rgba(0,0,0,0.35),0_4px_20px_3px_rgba(0,0,0,0.5)]" />
      <Dialog />
      <div className="absolute top-[213px] left-[373px] flex h-[43px] w-[202px] items-center justify-center rounded-[5px] bg-black/80 text-[14px] tracking-[0.08px] whitespace-nowrap text-white">Open your personal folder</div>
      <svg className="absolute top-[190px] left-[448px]" width="20" height="28" viewBox="0 0 20 28">
        <path d="M2 2v19l4.500-4 3.500 8 3.500-1.500-3.500-8h6.500z" fill="#2b2b2b" stroke="#fff" strokeWidth="1.300" />
      </svg>
    </div>
  );
}
